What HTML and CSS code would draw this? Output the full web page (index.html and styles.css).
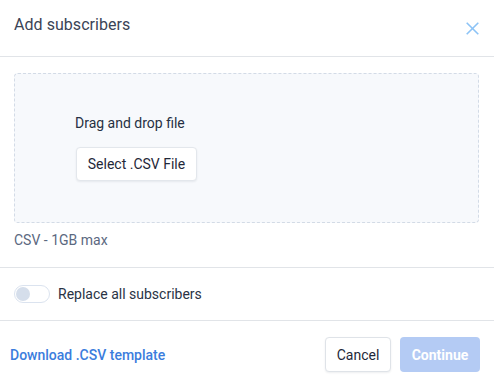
FILE: index.html
```html
<!DOCTYPE html>
<html>
<head>
<meta charset="utf-8">
<link rel="stylesheet" href="styles.css">
</head>
<body>
<div class="modal">
  <header class="header">
    <h1 class="title">Add subscribers</h1>
    <button class="close" aria-label="Close">
      <svg width="13" height="13" viewBox="0 0 13 13"><path d="M0.7 0.7L12.3 12.3M12.3 0.7L0.7 12.3" stroke="#8cc3f6" stroke-width="1.6" fill="none"/></svg>
    </button>
  </header>
  <section class="body">
    <div class="dropzone">
      <div class="drop-text">Drag and drop file</div>
      <button class="btn btn-select">Select .CSV File</button>
    </div>
    <div class="hint">CSV - 1GB max</div>
  </section>
  <section class="option">
    <span class="toggle"><span class="knob"></span></span>
    <span class="option-label">Replace all subscribers</span>
  </section>
  <footer class="footer">
    <a class="download" href="#">Download .CSV template</a>
    <div class="actions">
      <button class="btn btn-cancel">Cancel</button>
      <button class="btn btn-continue">Continue</button>
    </div>
  </footer>
</div>
</body>
</html>
```
FILE: styles.css
```css
* { box-sizing: border-box; }
html, body { margin: 0; padding: 0; background: #fff; }
body { font-family: Roboto, "Noto Sans", sans-serif; width: 494px; height: 386px; overflow: hidden; }
.modal { width: 494px; }
.header {
  display: flex; align-items: flex-start; justify-content: space-between;
  height: 57px; padding: 15px 14px 0 14px;
  border-bottom: 1px solid #e1e4e8;
}
.title { margin: 0; font-size: 16px; line-height: 20px; font-weight: 400; color: #3a4356; letter-spacing: 0.05px; }
.close { border: 0; background: none; padding: 0; margin: 7px 1px 0 0; width: 13px; height: 13px; display: block; }
.close svg { display: block; }
.body { padding: 16px 15px 0 14px; height: 211px; border-bottom: 1px solid #e1e4e8; }
.dropzone {
  border: 1px dashed #d3dbe6; border-radius: 4px; background: #f7f9fc;
  padding: 39px 0 41px 60px;
  display: flex; flex-direction: column; align-items: flex-start; gap: 14px;
}
.drop-text { font-size: 14px; line-height: 20px; color: #263043; }
.btn { font-family: inherit; cursor: pointer; border-radius: 4px; }
.btn-select {
  height: 34px; width: 121px; margin-left: 1px; padding: 0;
  background: #fff; border: 1px solid #e3e7ec; box-shadow: 0 1px 2px rgba(30,40,60,0.08);
  font-size: 14px; color: #1f2839;
}
.hint { margin-top: 8px; font-size: 14px; line-height: 18px; color: #5b6880; }
.option {
  display: flex; align-items: center; gap: 8px;
  height: 53px; padding: 0 14px; border-bottom: 1px solid #e1e4e8;
}
.toggle {
  width: 36px; height: 18px; border: 1px solid #dbe3ef; border-radius: 9px; background: #fff;
  display: flex; align-items: center; padding-left: 1px;
}
.knob { width: 14px; height: 14px; border-radius: 50%; background: #d5deeb; }
.option-label { font-size: 14px; line-height: 20px; color: #2a3345; }
.footer {
  display: flex; align-items: center; justify-content: space-between;
  padding: 16px 14px 0 10px;
}
.download { font-size: 14px; font-weight: 500; color: #3b7ddd; text-decoration: none; }
.actions { display: flex; gap: 9px; }
.btn-cancel {
  width: 66px; height: 35px; padding: 0; background: #fff; border: 1px solid #dfe3e8;
  box-shadow: 0 1px 2px rgba(30,40,60,0.08); font-size: 14px; color: #1f2839;
}
.btn-continue {
  width: 80px; height: 35px; padding: 0; background: #b4cbf4; border: 0;
  font-size: 14px; font-weight: 700; color: #fff;
}
```
